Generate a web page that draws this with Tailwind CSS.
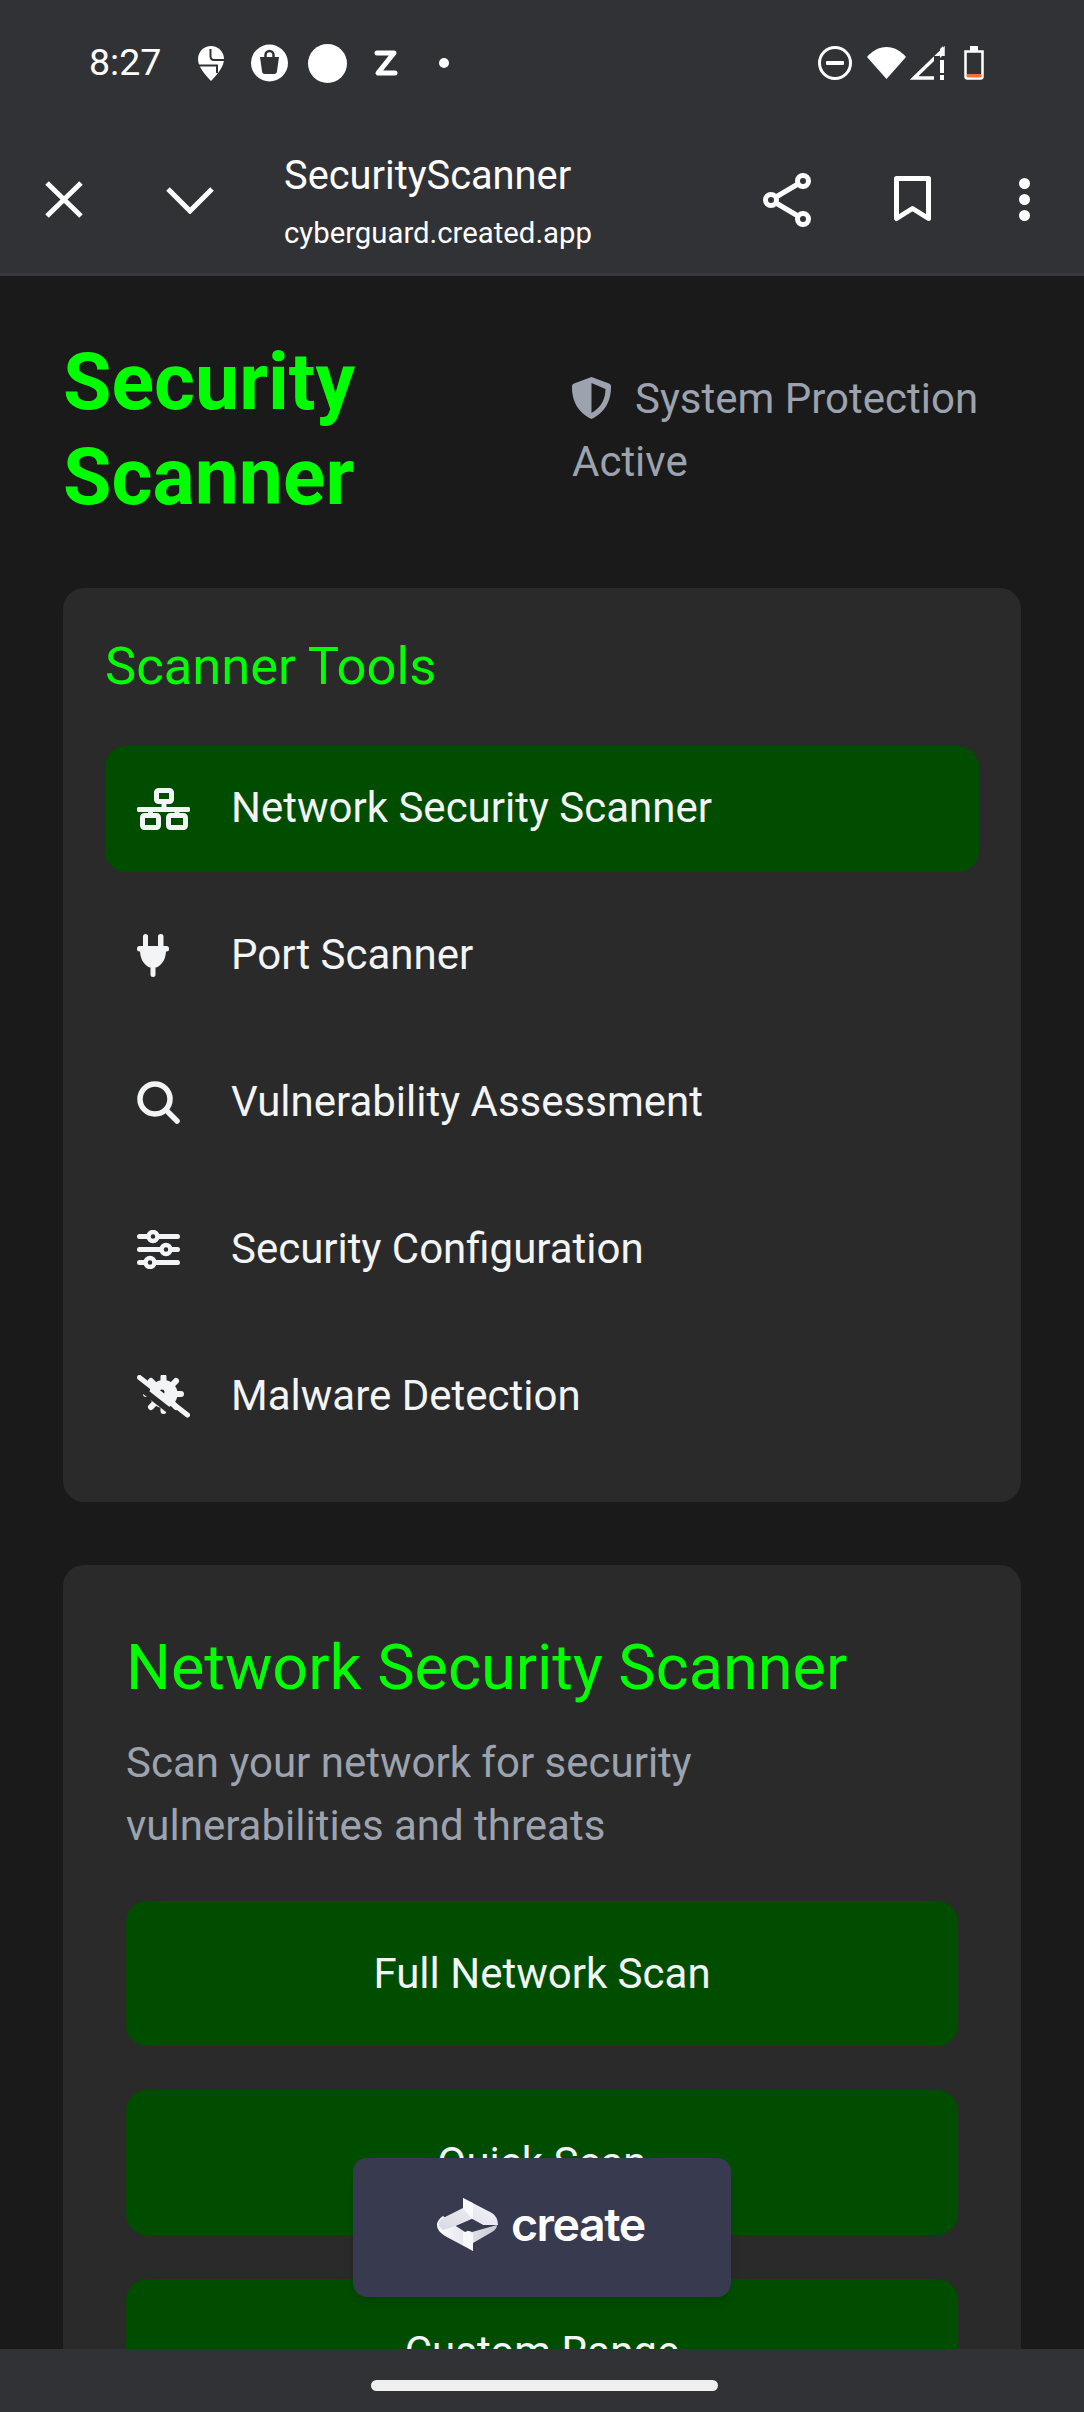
<!DOCTYPE html>
<html lang="en">
<head>
    <meta charset="UTF-8">
    <meta name="viewport" content="width=device-width, initial-scale=1.0">
    <title>SecurityScanner</title>
    <script src="https://cdn.jsdelivr.net/npm/@tailwindcss/browser@4"></script>
</head>
<body class="bg-[#1a1a1a] font-['Roboto',sans-serif]">
    <div class="relative h-[2412px] w-[1084px] flex flex-col overflow-hidden">
        <!-- phone status bar -->
        <div class="h-[110px] shrink-0 bg-[#313236] flex items-start justify-between pt-[43px] pl-[89px] pr-[100px] text-white">
            <div class="flex items-center h-[40px]">
                <span class="text-[37.500px] leading-none w-[109px]">8:27</span>
                <svg class="w-[26px] h-[35px]" viewBox="0 0 26 35"><path fill="#fff" d="M13 0C5.800 0 0 5.800 0 13c0 7 6 15 13 22 7-7 13-15 13-22C26 5.800 20.200 0 13 0z"/><path fill="none" stroke="#313236" stroke-width="2" d="M26 14H16Q12.500 14 12.500 10V3M0 19.500H19V27"/></svg>
                <svg class="w-[37px] h-[38px] ml-[27px]" viewBox="0 0 37 38"><circle cx="18.500" cy="19" r="18.500" fill="#fff"/><path fill="#313236" d="M9 13h19l-2 14a3 3 0 0 1-3 3H14a3 3 0 0 1-3-3z"/><path fill="none" stroke="#313236" stroke-width="2.500" d="M14.500 14v-3a4 4 0 0 1 8 0v3"/></svg>
                <div class="w-[39px] h-[39px] ml-[20px] rounded-full bg-white"></div>
                <svg class="w-[24px] h-[26px] ml-[27px]" viewBox="0 0 24 26"><path fill="none" stroke="#fff" stroke-width="5" stroke-linecap="round" stroke-linejoin="round" d="M3 3h17L4 23h17"/></svg>
                <div class="w-[10px] h-[10px] ml-[41px] rounded-full bg-white"></div>
            </div>
            <div class="flex items-center h-[40px]">
                <svg class="w-[34px] h-[34px]" viewBox="0 0 34 34"><circle cx="17" cy="17" r="15.500" fill="none" stroke="#fff" stroke-width="3"/><rect x="8" y="15" width="18" height="4" rx="1" fill="#fff"/></svg>
                <svg class="w-[39px] h-[32px] ml-[15px]" viewBox="0 0 39 32"><path fill="#fff" d="M0 10C5 4 12 0 19.500 0S34 4 39 10L19.500 32z"/></svg>
                <svg class="w-[35px] h-[34px] ml-[4px]" viewBox="0 0 35 34"><path fill="none" stroke="#fff" stroke-width="3.500" d="M4 32 33 4v28H4z"/><rect x="24" y="10" width="11" height="24" fill="#313236"/><path fill="#fff" d="M33 0v9l-3 3V3zM30 14h4v13h-4zM30 29h4v5h-4z"/></svg>
                <svg class="w-[20px] h-[34px] ml-[19px]" viewBox="0 0 20 34"><path fill="none" stroke="#fff" stroke-width="2.500" d="M1.500 5.500h17v25a2 2 0 0 1-2 2h-13a2 2 0 0 1-2-2z"/><rect x="6" y="0" width="8" height="5" fill="#fff"/><rect x="3" y="28" width="14" height="3" fill="#ff6b3d"/></svg>
            </div>
        </div>

        <!-- browser toolbar -->
        <div class="h-[166px] shrink-0 bg-[#313236] border-b-[3px] border-[#38393d] flex items-center pt-[16px] text-white">
            <svg class="w-[38px] h-[37px] ml-[45px]" viewBox="0 0 38 37"><path stroke="#fff" stroke-width="5" d="M2 2l34 33M36 2 2 35"/></svg>
            <svg class="w-[48px] h-[28px] ml-[83px]" viewBox="0 0 48 28"><path fill="none" stroke="#fff" stroke-width="5" d="M2 3l22 22L46 3"/></svg>
            <div class="ml-[70px] mt-[4px] flex-1">
                <div class="text-[39.800px] leading-[50px]">SecurityScanner</div>
                <div class="text-[29.300px] leading-[40px] mt-[12px]">cyberguard.created.app</div>
            </div>
            <svg class="w-[48px] h-[54px] mr-[83px]" viewBox="0 0 48 54" fill="none" stroke="#fff" stroke-width="5"><circle cx="8" cy="27" r="5.500"/><circle cx="40" cy="8" r="5.500"/><circle cx="40" cy="46" r="5.500"/><path d="M13 24 35 11M13 30l22 13"/></svg>
            <svg class="w-[37px] h-[47px] mr-[88px]" viewBox="0 0 37 47"><path fill="none" stroke="#fff" stroke-width="5" stroke-linejoin="round" d="M2.500 2.500h32v40l-16-10-16 10z"/></svg>
            <div class="flex flex-col gap-[5px] mr-[54px]">
                <div class="w-[11px] h-[11px] rounded-full bg-white"></div>
                <div class="w-[11px] h-[11px] rounded-full bg-white"></div>
                <div class="w-[11px] h-[11px] rounded-full bg-white"></div>
            </div>
        </div>

        <!-- page -->
        <div class="flex-1 overflow-hidden px-[63px] pt-[59px]">
            <div class="flex items-center justify-between mb-[64px]">
                <h1 class="text-[78.750px] leading-[94.500px] font-bold text-[#00ff00] w-[400px]">Security Scanner</h1>
                <div class="text-[42px] leading-[63px] text-[#9ca3af] w-[449px]">
                    <svg class="inline-block w-[39px] h-[42px] mr-[24px] align-[-6px]" viewBox="0 0 39 42"><path fill="#9ca3af" fill-rule="evenodd" d="M19.500 0 37 6.500c2 1 2 2 2 3.500 0 10-3 24-19.500 32C3 34 0 20 0 10c0-1.500 0-2.500 2-3.500zm0 6v30c11-6 14-16 14-24z"/></svg>System Protection Active
                </div>
            </div>

            <div class="bg-[#2a2a2a] rounded-[21px] p-[42px] mb-[63px]">
                <h2 class="text-[52.500px] leading-[73.500px] text-[#00ff00] mb-[42px]">Scanner Tools</h2>
                <div class="flex flex-col gap-[21px] text-[42px] text-[#f3f4f6]">
                    <div class="h-[126px] flex items-center pl-[31.500px] rounded-[21px] bg-[#004d00]">
                        <div class="w-[94.500px] shrink-0">
                            <svg class="block w-[53px] h-[43px]" viewBox="0 0 53 43" fill="none" stroke="#f3f4f6" stroke-width="5"><rect x="19.500" y="3.500" width="15" height="11" rx="2"/><path d="M27 14v9M13.500 22.500v6M40 22.500v6"/><path d="M2 22.500h49" stroke-linecap="round"/><rect x="5.500" y="28.500" width="16" height="12" rx="2"/><rect x="31.500" y="28.500" width="17" height="12" rx="2"/></svg>
                        </div>
                        <span class="mb-[2px]">Network Security Scanner</span>
                    </div>
                    <div class="h-[126px] flex items-center pl-[31.500px] rounded-[21px]">
                        <div class="w-[94.500px] shrink-0">
                            <svg class="block w-[32px] h-[43px]" viewBox="0 0 32 43" fill="#f3f4f6"><rect x="6" y="0" width="5" height="14" rx="2.500"/><rect x="21" y="0" width="5.500" height="14" rx="2.500"/><rect x="0" y="12" width="32" height="5.500" rx="2.500"/><path d="M3 16h26c0 8-3 13-7 16-2 1.500-4 2-6 2s-4-.500-6-2c-4-3-7-8-7-16z"/><rect x="13.500" y="32" width="5" height="11" rx="2.500"/></svg>
                        </div>
                        <span class="mb-[2px]">Port Scanner</span>
                    </div>
                    <div class="h-[126px] flex items-center pl-[31.500px] rounded-[21px]">
                        <div class="w-[94.500px] shrink-0">
                            <svg class="block w-[43px] h-[43px]" viewBox="0 0 43 43" fill="none" stroke="#f3f4f6" stroke-width="5.500" stroke-linecap="round"><circle cx="18" cy="18" r="15"/><path d="M29.500 29.500 40 40"/></svg>
                        </div>
                        <span class="mb-[2px]">Vulnerability Assessment</span>
                    </div>
                    <div class="h-[126px] flex items-center pl-[31.500px] rounded-[21px]">
                        <div class="w-[94.500px] shrink-0">
                            <svg class="block w-[43px] h-[39px]" viewBox="0 0 43 39" stroke="#f3f4f6" stroke-width="5" stroke-linecap="round"><path d="M2.500 6.500h38M2.500 19.500h38M2.500 32.500h38"/><circle cx="16" cy="6.500" r="4.500" fill="#2a2a2a" stroke-width="4.500"/><circle cx="29" cy="19.500" r="4.500" fill="#2a2a2a" stroke-width="4.500"/><circle cx="13" cy="32.500" r="4.500" fill="#2a2a2a" stroke-width="4.500"/></svg>
                        </div>
                        <span class="mb-[2px]">Security Configuration</span>
                    </div>
                    <div class="h-[126px] flex items-center pl-[31.500px] rounded-[21px]">
                        <div class="w-[94.500px] shrink-0">
                            <svg class="block w-[53px] h-[43px]" viewBox="0 0 53 43"><g stroke="#f3f4f6" stroke-width="6" stroke-linecap="round"><path d="M26.500 2v34M9 19h35M14 6l25 26M39 6 14 32"/></g><circle cx="26.500" cy="19" r="14" fill="#f3f4f6"/><circle cx="25" cy="17" r="2.500" fill="#2a2a2a"/><path d="M-3 8 48 48" stroke="#2a2a2a" stroke-width="6"/><path d="M2.500 2.500 50.500 40" stroke="#f3f4f6" stroke-width="5" stroke-linecap="round"/></svg>
                        </div>
                        <span class="mb-[2px]">Malware Detection</span>
                    </div>
                </div>
            </div>

            <div class="bg-[#2a2a2a] rounded-[21px] p-[63px]">
                <h2 class="text-[63px] leading-[84px] text-[#00ff00] mt-[-2px] mb-[21px]">Network Security Scanner</h2>
                <p class="text-[42px] leading-[63px] text-[#9ca3af] mb-[44px]">Scan your network for security vulnerabilities and threats</p>
                <div class="flex flex-col gap-[44px] text-[42px] text-[#f3f4f6]">
                    <div class="h-[145px] flex items-center justify-center rounded-[21px] bg-[#004d00]">Full Network Scan</div>
                    <div class="h-[145px] flex items-center justify-center rounded-[21px] bg-[#004d00]">Quick Scan</div>
                    <div class="h-[145px] flex items-center justify-center rounded-[21px] bg-[#004d00]">Custom Range</div>
                </div>
            </div>
        </div>

        <!-- android gesture bar -->
        <div class="h-[63px] shrink-0 bg-[#313236] flex items-start justify-center pt-[31px] pl-[5px]">
            <div class="w-[347px] h-[11px] rounded-full bg-[#efefef]"></div>
        </div>

        <!-- create badge -->
        <div class="absolute left-[353px] top-[2158px] w-[378px] h-[139px] rounded-[14px] bg-[#383a50] shadow-lg flex items-center pl-[84px] gap-[12px]">
            <svg class="w-[62px] h-[53px] mt-[-6px]" viewBox="0 0 62 53">
                <defs>
                    <linearGradient id="logoTop" x1="0" y1="1" x2="1" y2="0"><stop offset="0" stop-color="#d9d9e4"/><stop offset="1" stop-color="#f6f6fb"/></linearGradient>
                    <linearGradient id="logoLow" x1="0" y1="0" x2="1" y2="0"><stop offset="0" stop-color="#ffffff"/><stop offset="1" stop-color="#c9c9d6"/></linearGradient>
                </defs>
                <path fill="url(#logoLow)" d="M0 27q0-5 6-9L19 28 35 34 60 27q0 4-5 7L36 45v8L8 38q-8-5-8-11z"/>
                <path fill="url(#logoTop)" d="M8 19 26 10V0L55 15q6 4 6 12L46 27 35 21 19 28 6 32Q-3 25 8 19z"/>
                <path fill="#fff" d="M26 0 36 5V21H35L26 10zM26 31l10 4V53L26 47z" opacity=".75"/>
                <path fill="#383a50" d="M19 28 35 21 46 27 28 34z"/>
            </svg>
            <span class="text-white text-[46.500px] font-semibold tracking-[-1.500px] font-['Inter',sans-serif] leading-none mt-[-6px]">create</span>
        </div>
    </div>
</body>
</html>
